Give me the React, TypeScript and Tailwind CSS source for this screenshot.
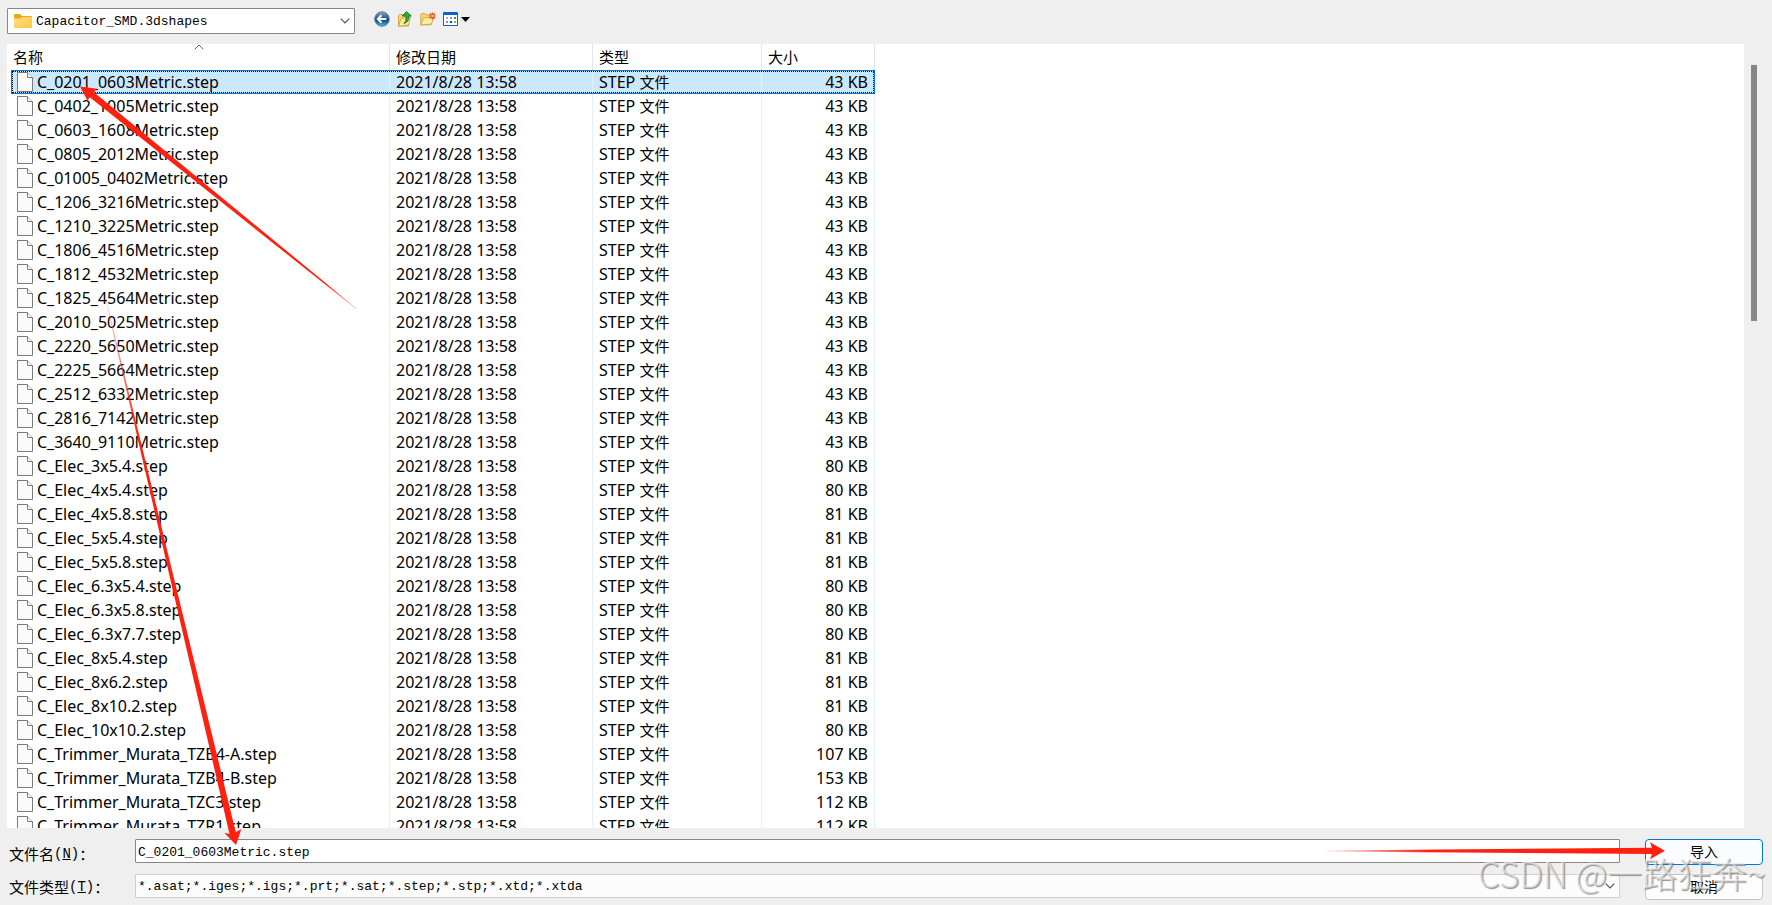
import React from "react";

type FileRow = { name: string; size: string };

const files: FileRow[] = [
  ...[
    "C_0201_0603Metric.step",
    "C_0402_1005Metric.step",
    "C_0603_1608Metric.step",
    "C_0805_2012Metric.step",
    "C_01005_0402Metric.step",
    "C_1206_3216Metric.step",
    "C_1210_3225Metric.step",
    "C_1806_4516Metric.step",
    "C_1812_4532Metric.step",
    "C_1825_4564Metric.step",
    "C_2010_5025Metric.step",
    "C_2220_5650Metric.step",
    "C_2225_5664Metric.step",
    "C_2512_6332Metric.step",
    "C_2816_7142Metric.step",
    "C_3640_9110Metric.step",
  ].map((name) => ({ name, size: "43 KB" })),
  { name: "C_Elec_3x5.4.step", size: "80 KB" },
  { name: "C_Elec_4x5.4.step", size: "80 KB" },
  { name: "C_Elec_4x5.8.step", size: "81 KB" },
  { name: "C_Elec_5x5.4.step", size: "81 KB" },
  { name: "C_Elec_5x5.8.step", size: "81 KB" },
  { name: "C_Elec_6.3x5.4.step", size: "80 KB" },
  { name: "C_Elec_6.3x5.8.step", size: "80 KB" },
  { name: "C_Elec_6.3x7.7.step", size: "80 KB" },
  { name: "C_Elec_8x5.4.step", size: "81 KB" },
  { name: "C_Elec_8x6.2.step", size: "81 KB" },
  { name: "C_Elec_8x10.2.step", size: "81 KB" },
  { name: "C_Elec_10x10.2.step", size: "80 KB" },
  { name: "C_Trimmer_Murata_TZB4-A.step", size: "107 KB" },
  { name: "C_Trimmer_Murata_TZB4-B.step", size: "153 KB" },
  { name: "C_Trimmer_Murata_TZC3.step", size: "112 KB" },
  { name: "C_Trimmer_Murata_TZR1.step", size: "112 KB" },
];

const uiFont = "font-['Noto_Sans','Noto_Sans_CJK_SC',sans-serif]";
const monoFont = "font-['Liberation_Mono','Noto_Sans_CJK_SC',monospace]";

function FileIcon() {
  return (
    <svg className="block shrink-0" width="16" height="20" viewBox="0 0 16 20" aria-hidden="true">
      <path d="M.5.5h10l5 5v14H.5z" fill="#fafafa" stroke="#7b7b7b" />
      <path d="M10.5.5v5h5" fill="#fff" stroke="#7b7b7b" />
    </svg>
  );
}

function FolderIcon() {
  return (
    <svg width="18" height="14" viewBox="0 0 18 14" aria-hidden="true">
      <defs>
        <linearGradient id="folder" x1="0" y1="0" x2="1" y2="1">
          <stop offset="0" stopColor="#ffe08a" />
          <stop offset="1" stopColor="#fcc63c" />
        </linearGradient>
      </defs>
      <path d="M0 1.200Q0 0 1.200 0H6l2 2h9q1 0 1 1v3H0z" fill="#eba81c" />
      <path d="M0 4.500h6.500L8.500 3H17q1 0 1 1v9q0 1-1 1H1q-1 0-1-1z" fill="url(#folder)" />
    </svg>
  );
}

function BackIcon() {
  return (
    <svg width="16" height="16" viewBox="0 0 16 16" aria-hidden="true">
      <defs>
        <linearGradient id="ball" x1="0" y1="0" x2="0" y2="1">
          <stop offset="0" stopColor="#8fa9c6" />
          <stop offset=".45" stopColor="#1f5596" />
          <stop offset=".6" stopColor="#114a8c" />
          <stop offset="1" stopColor="#43c4ee" />
        </linearGradient>
      </defs>
      <circle cx="8" cy="8" r="7.300" fill="url(#ball)" stroke="#5b7899" strokeWidth=".9" />
      <path d="M7.500 4.200 3.800 8l3.700 3.800M4.200 8H12.300" fill="none" stroke="#fff" strokeWidth="2" />
    </svg>
  );
}

function UpIcon() {
  return (
    <svg width="16" height="16" viewBox="0 0 16 16" aria-hidden="true">
      <path d="M1.500 15V4.500l1-1h3l1 1.500h5V15z" fill="#f6d873" stroke="#c99a2e" strokeWidth=".8" />
      <path d="M1.500 15.300 4 7.500l9.500-1.500-2 8z" fill="#fdeea6" stroke="#c99a2e" strokeWidth=".8" />
      <path d="M9.500.6 14.300 5h-2.500c.2 4-1 6.500-5 7.400C8.800 10.500 9.200 8.500 9 5H5z" fill="#2fae35" stroke="#126d1c" strokeWidth=".8" />
    </svg>
  );
}

function NewFolderIcon() {
  return (
    <svg width="16" height="14" viewBox="0 0 16 14" aria-hidden="true">
      <path d="M.8 12.800V2.500l1-1h3l1.200 1.300h5v10z" fill="#f6d873" stroke="#c99a2e" strokeWidth=".8" />
      <path d="M.8 13 3.500 6l10.500-1-2.500 7z" fill="#fdeea6" stroke="#c99a2e" strokeWidth=".8" />
      <path d="M12.500.4v7.200M9 4h7M10 1.500l5 5M15 1.500l-5 5" stroke="#ee4b23" strokeWidth="1.200" />
      <circle cx="12.500" cy="4" r="1.300" fill="#ffb35c" />
    </svg>
  );
}

function ViewIcon() {
  return (
    <svg width="28" height="14" viewBox="0 0 28 14" aria-hidden="true">
      <rect width="15" height="14" rx=".8" fill="#0a63d0" />
      <rect x="1" y="3" width="13" height="10" fill="#fff" />
      <g>
        <rect x="3" y="5" width="2" height="2" fill="#a9b6c8" />
        <rect x="7" y="5" width="2" height="2" fill="#6aa0e0" />
        <rect x="11" y="5" width="2" height="2" fill="#2f9a54" />
        <rect x="3" y="9" width="2" height="2" fill="#e0705a" />
        <rect x="7" y="9" width="2" height="2" fill="#1c3f86" />
        <rect x="11" y="9" width="2" height="2" fill="#c9982c" />
      </g>
      <path d="M18 5h9l-4.500 5z" fill="#000" />
    </svg>
  );
}

function Chevron() {
  return (
    <svg width="10" height="6" viewBox="0 0 10 6" aria-hidden="true">
      <path d="M.7.700 5 5 9.300.7" fill="none" stroke="#555" strokeWidth="1.200" />
    </svg>
  );
}

function Arrows() {
  return (
    <svg
      className="pointer-events-none absolute left-0 top-0"
      width="1772"
      height="905"
      viewBox="0 0 1772 905"
      aria-hidden="true"
    >
      <defs>
        <linearGradient id="fadeA" gradientUnits="userSpaceOnUse" x1="357" y1="309" x2="80" y2="86">
          <stop offset="0" stopColor="#ff2010" stopOpacity=".2" />
          <stop offset=".12" stopColor="#ff2010" />
        </linearGradient>
        <linearGradient id="fadeB" gradientUnits="userSpaceOnUse" x1="106" y1="302" x2="236" y2="845">
          <stop offset="0" stopColor="#ff2010" stopOpacity=".2" />
          <stop offset=".25" stopColor="#ff2010" />
        </linearGradient>
        <linearGradient id="fadeC" gradientUnits="userSpaceOnUse" x1="1326" y1="851" x2="1665" y2="851">
          <stop offset="0" stopColor="#ff2010" stopOpacity=".1" />
          <stop offset=".3" stopColor="#ff2010" />
        </linearGradient>
      </defs>
      <path d="M80 86.500 97 88.700 94 92.300 357.300 309 356.700 309.600 89.800 97.300 87.500 100.700z" fill="url(#fadeA)" />
      <path d="M236 845 241.300 829.300 235.700 832 106.800 302 106 302.300 229.500 834 224.300 832.700z" fill="url(#fadeB)" />
      <path d="M1665 850.800 1650 842.300 1652 847.700 1326 850.500V851.500L1652 854 1650 859.300z" fill="url(#fadeC)" />
    </svg>
  );
}

const iconButton = "flex h-5 shrink-0 items-center justify-center";

export default function App() {
  return (
    <div className={`relative flex h-screen flex-col overflow-hidden bg-[#efefef] text-[15px] text-black ${uiFont}`}>
      <header className="flex h-11 shrink-0 items-start pl-[7px] pt-2">
        <div className="relative w-[348px]">
          <span className="pointer-events-none absolute left-[7px] top-[6px]">
            <FolderIcon />
          </span>
          <select
            aria-label="Folder"
            className={`block h-[26px] w-full appearance-none rounded-[1px] border border-[#868686] bg-white pl-7 pt-0.5 text-[13px] ${monoFont}`}
          >
            <option>Capacitor_SMD.3dshapes</option>
          </select>
          <span className="pointer-events-none absolute right-[5px] top-[10px] flex">
            <Chevron />
          </span>
        </div>
        <div className="ml-[19px] flex items-center gap-[7px] pt-px">
          <button type="button" aria-label="Back" className={iconButton}>
            <BackIcon />
          </button>
          <button type="button" aria-label="Up" className={iconButton}>
            <UpIcon />
          </button>
          <button type="button" aria-label="New folder" className={iconButton}>
            <NewFolderIcon />
          </button>
          <button type="button" aria-label="View" className={iconButton}>
            <ViewIcon />
          </button>
        </div>
      </header>

      <main className="flex min-h-0 flex-1 pl-[7px]">
        <div className="min-w-0 flex-1 overflow-hidden bg-white pl-1">
          <table className="w-[864px] table-fixed border-separate border-spacing-0">
            <colgroup>
              <col className="w-[379px]" />
              <col className="w-[203px]" />
              <col className="w-[169px]" />
              <col className="w-[113px]" />
            </colgroup>
            <thead>
              <tr className="h-[26px] text-left leading-5">
                <th className="relative border-r border-[#e5e5e5] p-0 pl-0.5 font-normal">
                  名称
                  <span className="absolute left-[183px] top-0 flex">
                    <svg width="10" height="6" viewBox="0 0 10 6" aria-hidden="true">
                      <path d="M.7 5.300 5 1 9.300 5.300" fill="none" stroke="#666" />
                    </svg>
                  </span>
                </th>
                <th className="border-r border-[#e5e5e5] p-0 pl-1.5 font-normal">修改日期</th>
                <th className="border-r border-[#e5e5e5] p-0 pl-1.5 font-normal">类型</th>
                <th className="border-r border-[#e5e5e5] p-0 pl-1.5 font-normal">大小</th>
              </tr>
            </thead>
            <tbody className="text-base leading-5">
              {files.map((file, i) => (
                <tr
                  key={file.name}
                  aria-selected={i === 0}
                  className={i === 0 ? "relative h-6 bg-[#cce8ff]" : "h-6"}
                >
                  <td className="border-r border-[#e4f0fb] p-0 pl-[6px]">
                    {i === 0 && (
                      <span className="absolute inset-0 border border-[#0078d7]">
                        <span className="block h-full border border-dotted border-black" />
                      </span>
                    )}
                    <span className="flex items-center gap-1 whitespace-nowrap">
                      <FileIcon />
                      {file.name}
                    </span>
                  </td>
                  <td className="border-r border-[#e4f0fb] p-0 pl-1.5">2021/8/28 13:58</td>
                  <td className="border-r border-[#e4f0fb] p-0 pl-1.5">
                    STEP <span className="text-[15px] leading-none">文件</span>
                  </td>
                  <td className="border-r border-[#e4f0fb] p-0 pr-1.5 text-right">{file.size}</td>
                </tr>
              ))}
            </tbody>
          </table>
        </div>
        <div className="w-7 shrink-0 pl-[7px] pt-[21px]">
          <div className="h-64 w-1.5 bg-[#858585]" />
        </div>
      </main>

      <footer className="grid shrink-0 grid-cols-[126px_1fr_118px] gap-y-[9px] pb-[5px] pl-[9px] pr-[9px] pt-[11px]">
        <label htmlFor="file-name" className="flex h-[26px] items-center pt-1">
          文件名<span className={`text-[14px] ${monoFont}`}>(<u>N</u>)</span>：
        </label>
        <input
          id="file-name"
          defaultValue="C_0201_0603Metric.step"
          className={`mr-[25px] h-6 rounded-[1px] border border-[#868686] bg-white px-0.5 pt-0.5 text-[13px] ${monoFont}`}
        />
        <button type="button" className="h-[26px] rounded border border-[#0078d7] bg-[#fbfcff] pb-0.5 text-[14px]">
          导入
        </button>
        <label htmlFor="file-type" className="flex h-[26px] items-center">
          文件类型<span className={`text-[14px] ${monoFont}`}>(<u>T</u>)</span>：
        </label>
        <div className="relative mr-[25px]">
          <select
            id="file-type"
            className={`block h-6 w-full appearance-none rounded-[1px] border border-[#cfcfcf] bg-[#fcfcfc] px-0.5 pt-0.5 text-[13px] ${monoFont}`}
          >
            <option>*.asat;*.iges;*.igs;*.prt;*.sat;*.step;*.stp;*.xtd;*.xtda</option>
          </select>
          <span className="pointer-events-none absolute right-[5px] top-[9px] flex">
            <Chevron />
          </span>
        </div>
        <button type="button" className="h-[26px] rounded border border-[#c4c4c4] bg-[#fdfdfd] pb-0.5 text-[14px]">
          取消
        </button>
      </footer>

      <Arrows />
      <div className="pointer-events-none absolute bottom-3 right-1.5 whitespace-nowrap font-['Noto_Sans_CJK_SC',sans-serif] text-[35px] font-light leading-10 text-[#d8d8d8]/60 [text-shadow:-1px_-1px_0_rgba(255,255,255,0.5),1px_1px_1px_rgba(100,100,100,0.7)]">
        CSDN @一路狂奔~
      </div>
    </div>
  );
}
